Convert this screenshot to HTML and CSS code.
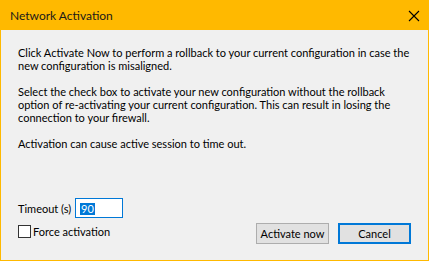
FILE: index.html
```html
<!DOCTYPE html>
<html lang="en">

<head>
    <meta charset="UTF-8">
    <title>Network Activation</title>
    <link rel="stylesheet" href="styles.css">
</head>

<body>
    <div class="window">
        <div class="title-bar">
            <span class="title">Network Activation</span>
            <svg class="close" width="12" height="12" viewBox="0 0 12 12">
                <path d="M1 1 L11 11 M11 1 L1 11" stroke="#000" stroke-width="1.1" fill="none" />
            </svg>
        </div>
        <div class="content">
            <p>Click Activate Now to perform a rollback to your current configuration in case the new configuration is misaligned.</p>
            <p>Select the check box to activate your new configuration without the rollback option of re-activating your current configuration. This can result in losing the connection to your firewall.</p>
            <p>Activation can cause active session to time out.</p>

            <div class="controls">
                <div class="timeout-row">
                    <label class="timeout-label" for="timeout">Timeout (s)</label>
                    <div class="textbox" id="timeout"><span class="selected">90</span></div>
                </div>
                <div class="bottom-row">
                    <label class="check">
                        <span class="checkbox"></span>
                        Force activation
                    </label>
                    <div class="buttons">
                        <button class="btn">Activate now</button>
                        <button class="btn btn-default">Cancel</button>
                    </div>
                </div>
            </div>
        </div>
    </div>
</body>

</html>
```

FILE: styles.css
```css
body {
    margin: 0;
    font-family: Lato, "Open Sans", sans-serif;
    font-size: 11px;
    color: #000;
    background-color: #fff;
}

.window {
    width: 429px;
    height: 261px;
    box-sizing: border-box;
    border: 1px solid #ffb900;
    border-top: none;
    display: flex;
    flex-direction: column;
    background-color: #f0f0f0;
}

.title-bar {
    height: 30px;
    flex-shrink: 0;
    background-color: #ffb900;
    display: flex;
    align-items: center;
    justify-content: space-between;
    padding: 0 9px 0 10px;
    margin: 0 -1px;
}

.title {
    font-size: 12px;
    color: #1a1a1a;
    padding-top: 1px;
}

.close {
    display: block;
    margin-top: 1px;
}

.content {
    flex: 1;
    display: flex;
    flex-direction: column;
    padding: 16px 17px 16px 17px;
}

.content p {
    margin: 0 0 13px 0;
    line-height: 13px;
}

.controls {
    margin-top: auto;
}

.timeout-row {
    display: flex;
    align-items: center;
}

.timeout-label {
    width: 57px;
    white-space: nowrap;
}

.textbox {
    width: 48px;
    height: 20px;
    box-sizing: border-box;
    border: 1px solid #0078d7;
    background-color: #fff;
    padding: 3px 0 0 4px;
}

.selected {
    display: inline-block;
    background-color: #0078d7;
    color: #fff;
    line-height: 12px;
    padding: 0 1px;
}

.bottom-row {
    display: flex;
    align-items: flex-start;
    justify-content: space-between;
    margin-top: 5px;
}

.check {
    display: flex;
    align-items: center;
    gap: 2px;
    margin-top: 2px;
    line-height: 13px;
}

.checkbox {
    width: 13px;
    height: 13px;
    box-sizing: border-box;
    border: 1px solid #333;
    background-color: #fff;
}

.buttons {
    display: flex;
    gap: 9px;
}

.btn {
    width: 73px;
    height: 21px;
    box-sizing: border-box;
    font-family: inherit;
    font-size: 11px;
    color: #000;
    background-color: #e1e1e1;
    border: 1px solid #adadad;
    padding: 0;
}

.btn-default {
    border: 2px solid #0078d7;
}
```
